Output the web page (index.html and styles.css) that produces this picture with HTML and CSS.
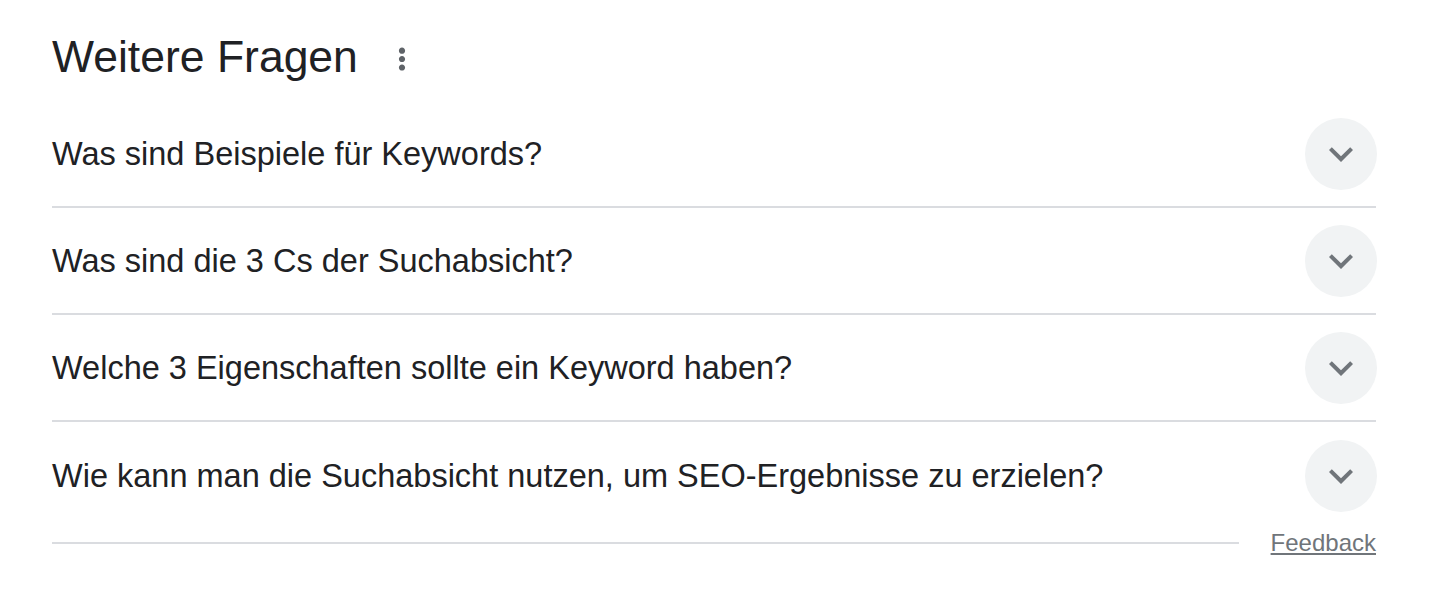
FILE: index.html
```html
<!DOCTYPE html>
<html lang="de">
<head>
<meta charset="utf-8">
<title>Weitere Fragen</title>
<link rel="stylesheet" href="styles.css">
</head>
<body>
<div class="paa">
  <div class="paa-head">
    <h2 class="paa-title">Weitere Fragen</h2>
    <span class="paa-more" aria-label="Weitere Optionen">
      <svg viewBox="0 0 24 24" width="34" height="34"><path fill="currentColor" d="M12 8.3c1.25 0 2.2-.95 2.2-2.2s-.95-2.2-2.2-2.2-2.2.95-2.2 2.2.95 2.2 2.2 2.2zm0 1.5c-1.25 0-2.2.95-2.2 2.2s.95 2.2 2.2 2.2 2.2-.95 2.2-2.2-.95-2.2-2.2-2.2zm0 6c-1.25 0-2.2.95-2.2 2.2s.95 2.2 2.2 2.2 2.2-.95 2.2-2.2-.95-2.2-2.2-2.2z"/></svg>
    </span>
  </div>
  <div class="paa-list">
    <div class="paa-row">
      <span class="paa-q">Was sind Beispiele für Keywords?</span>
      <span class="paa-btn"><svg viewBox="0 0 24 24" width="48" height="48"><path fill="currentColor" d="M16.59 8.59L12 13.17 7.41 8.59 6 10l6 6 6-6z"/></svg></span>
    </div>
    <div class="paa-row">
      <span class="paa-q">Was sind die 3 Cs der Suchabsicht?</span>
      <span class="paa-btn"><svg viewBox="0 0 24 24" width="48" height="48"><path fill="currentColor" d="M16.59 8.59L12 13.17 7.41 8.59 6 10l6 6 6-6z"/></svg></span>
    </div>
    <div class="paa-row">
      <span class="paa-q">Welche 3 Eigenschaften sollte ein Keyword haben?</span>
      <span class="paa-btn"><svg viewBox="0 0 24 24" width="48" height="48"><path fill="currentColor" d="M16.59 8.59L12 13.17 7.41 8.59 6 10l6 6 6-6z"/></svg></span>
    </div>
    <div class="paa-row paa-row-last">
      <span class="paa-q">Wie kann man die Suchabsicht nutzen, um SEO-Ergebnisse zu erzielen?</span>
      <span class="paa-btn"><svg viewBox="0 0 24 24" width="48" height="48"><path fill="currentColor" d="M16.59 8.59L12 13.17 7.41 8.59 6 10l6 6 6-6z"/></svg></span>
    </div>
  </div>
  <div class="paa-foot">
    <span class="paa-line"></span>
    <a class="paa-feedback" href="#">Feedback</a>
  </div>
</div>
</body>
</html>
```

FILE: styles.css
```css
* { box-sizing: border-box; }
html, body { margin: 0; padding: 0; background: #fff; }
body {
  font-family: Arial, "Liberation Sans", sans-serif;
  color: #202124;
}
.paa {
  padding: 31px 64px 0 52px;
}
.paa-head {
  display: flex;
  align-items: center;
  height: 52px;
  gap: 27px;
}
.paa-title {
  margin: 0;
  font-size: 44.5px;
  font-weight: 400;
  line-height: 52px;
  color: #202124;
}
.paa-more {
  display: flex;
  color: #5f6368;
  margin-top: 4px;
}
.paa-list {
  margin-top: 18px;
}
.paa-row {
  display: flex;
  align-items: center;
  justify-content: space-between;
  height: 107px;
  border-bottom: 2px solid #dadce0;
}
.paa-row-last {
  border-bottom: none;
}
.paa-q {
  font-size: 32.5px;
  line-height: 40px;
  color: #202124;
}
.paa-btn {
  width: 72px;
  height: 72px;
  border-radius: 50%;
  background: #f1f3f4;
  color: #70757a;
  display: flex;
  align-items: center;
  justify-content: center;
  flex: none;
  margin-right: -1px;
}
.paa-foot {
  display: flex;
  align-items: center;
  gap: 32px;
  height: 28px;
}
.paa-line {
  flex: 1;
  height: 2px;
  background: #dadce0;
}
.paa-feedback {
  font-size: 24px;
  line-height: 28px;
  color: #70757a;
  text-decoration: underline;
}
```
